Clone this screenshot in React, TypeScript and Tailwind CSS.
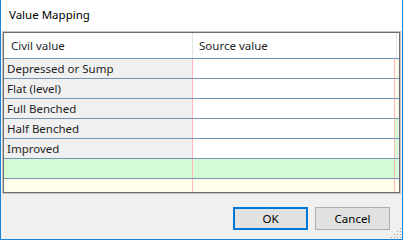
import React from "react";

type Row = { label: string; bg: string; right: string; filler: string };

const rows: Row[] = [
  { label: "Depressed or Sump", bg: "bg-[#f0f0f0]", right: "bg-white", filler: "bg-[#fffde8]" },
  { label: "Flat (level)", bg: "bg-[#f0f0f0]", right: "bg-white", filler: "bg-[#fffde8]" },
  { label: "Full Benched", bg: "bg-[#f0f0f0]", right: "bg-white", filler: "bg-[#fffde8]" },
  { label: "Half Benched", bg: "bg-[#f0f0f0]", right: "bg-white", filler: "bg-[#d4fcd4]" },
  { label: "Improved", bg: "bg-[#f0f0f0]", right: "bg-white", filler: "bg-[#d4fcd4]" },
  { label: "", bg: "bg-[#d4fcd4]", right: "bg-[#d4fcd4]", filler: "bg-[#d4fcd4]" },
];

export default function App() {
  return (
    <div
      className="w-[403px] h-[240px] flex flex-col bg-[#f0f0f0] border-l border-r border-b border-[#1883d7] text-[11.5px] overflow-hidden"
      style={{ fontFamily: '"Segoe UI", "Noto Sans", "Liberation Sans", sans-serif' }}
    >
      <div className="h-[31px] bg-white flex items-center pl-[8px] pb-[1px] text-black shrink-0">
        Value Mapping
      </div>
      <div className="pl-[1px] pr-[1px] shrink-0">
        <div className="border border-[#c4c4c4]">
          <div className="border border-[#6e6e6e] flex flex-col">
            <div className="h-[26px] flex bg-white border-b border-[#7396b8] text-[#1e1e1e]">
              <div className="w-[188px] pl-[7px] flex items-center">Civil value</div>
              <div className="w-px bg-[#e3e3e3]" />
              <div className="w-[203px] pl-[6px] flex items-center">Source value</div>
              <div className="w-px bg-[#e3e3e3]" />
              <div className="w-px bg-white" />
            </div>
            {rows.map((r, i) => (
              <div key={i} className="h-[20px] flex border-b border-[#7396b8] text-[#1e1e1e]">
                <div className={`w-[188px] pl-[3px] flex items-center ${r.bg}`}>{r.label}</div>
                <div className="w-px bg-[#ffb6bc]" />
                <div className={`w-[201px] ${r.right}`} />
                <div className="w-px bg-[#ffb6bc]" />
                <div className={`w-[3px] ${r.filler}`} />
              </div>
            ))}
            <div className="h-[13px] flex bg-[#fffeea]">
              <div className="w-[188px]" />
              <div className="w-px bg-[#ffb6bc]" />
              <div className="w-[201px]" />
              <div className="w-px bg-[#ffb6bc]" />
              <div className="w-[3px]" />
            </div>
          </div>
        </div>
      </div>
      <div className="relative flex-1 flex justify-end items-start pt-[13px] pr-[12px] gap-[7px] text-black">
        <button className="w-[75px] h-[23px] border-2 border-[#0078d7] bg-[#e1e1e1] flex items-center justify-center">
          OK
        </button>
        <button className="w-[75px] h-[23px] border border-[#adadad] bg-[#e1e1e1] flex items-center justify-center">
          Cancel
        </button>
        <svg className="absolute right-0 bottom-0" width="11" height="11" viewBox="0 0 11 11">
          {[
            [9, 1], [9, 4], [6, 4], [9, 7], [6, 7], [3, 7], [9, 10], [6, 10], [3, 10], [0, 10],
          ].map(([x, y], k) => (
            <rect key={k} x={x} y={y - 1} width="1" height="1" fill="#a0a0a0" />
          ))}
        </svg>
      </div>
    </div>
  );
}
